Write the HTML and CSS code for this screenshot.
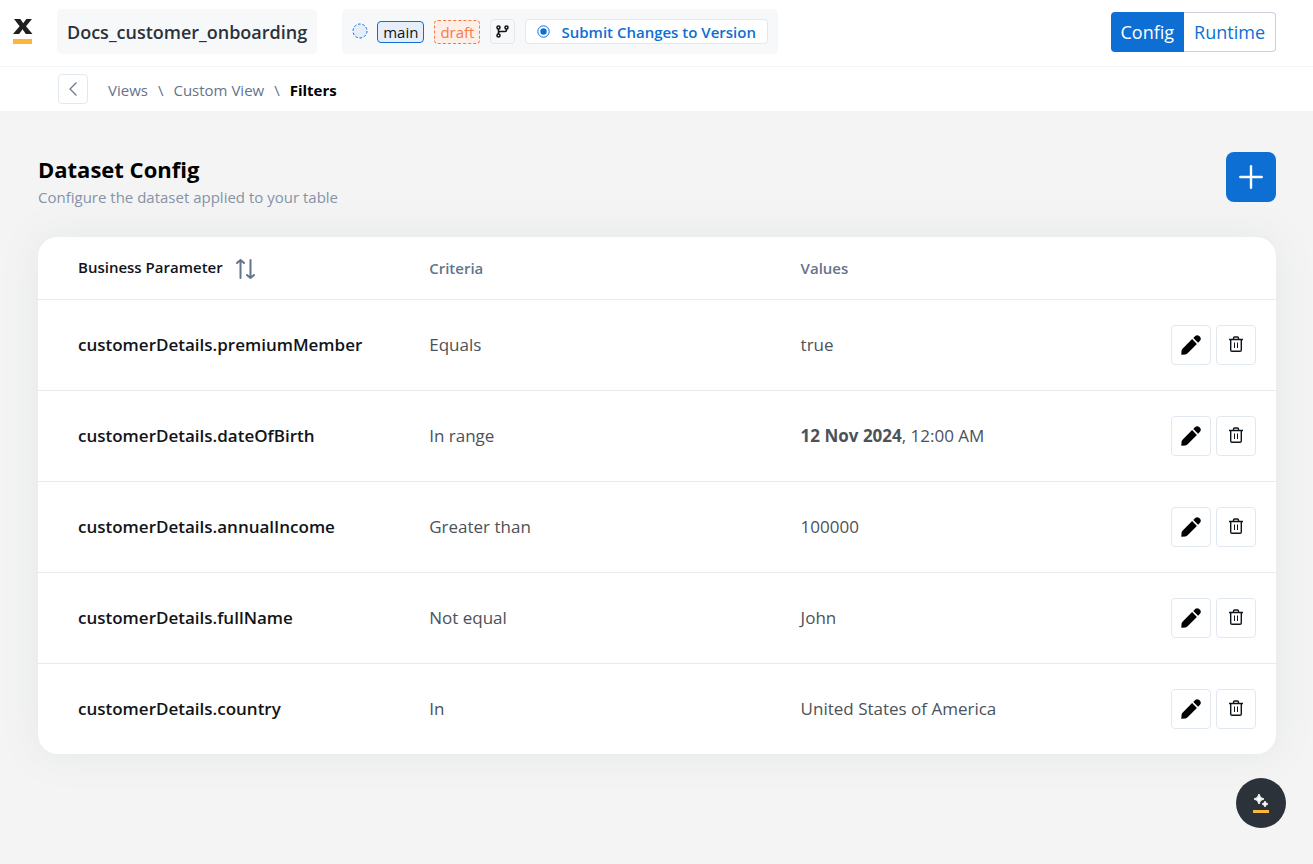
FILE: index.html
```
<!DOCTYPE html>
<html lang="en">
<head>
  <meta charset="UTF-8">
  <meta name="viewport" content="width=device-width, initial-scale=1.0">
  <title>Filters</title>
  <link rel="stylesheet" href="styles.css">
</head>
<body>

  <!-- Shared icons -->
  <svg class="sprite" aria-hidden="true">
    <symbol id="pencil" viewBox="0 0 20 20">
      <path d="M0.3 19.7 L0.6 15.6 Q0.8 14.4 1.8 13.4 L11.1 4.100 L15.900 8.900 L6.6 18.2 Q5.600 19.200 4.400 19.400 Z"/>
      <path d="M12.300 2.900 L14.200 1 Q16.200 -0.600 18.200 1 L19 1.800 Q20.600 3.800 19 5.800 L17.100 7.700 Z"/>
    </symbol>
    <symbol id="trash" viewBox="0 0 14 16">
      <path d="M0 3.500H14M4.500 3V2.300Q4.500 1 5.500 1H8.500Q9.500 1 9.500 2.300V3M1.700 3.500V14Q1.700 15.300 3 15.300H11Q12.300 15.300 12.300 14V3.500" fill="none" stroke="currentColor" stroke-width="1.400"/>
      <path d="M5.500 6.500V12M8.500 6.500V12" fill="none" stroke="currentColor"/>
    </symbol>
  </svg>

  <header class="topbar">
    <a class="logo" href="#" aria-label="Home">
      <svg width="20" height="26" viewBox="0 0 20 26">
        <path d="M1 0H7.300L10.200 4.300L13.300 0H19L13 7.300L19.500 15H12.800L9.600 10.300L6.100 15H0L6.600 7.300Z" fill="#1f1f1f"/>
        <path d="M0 20H19V25H0Z" fill="#fdb53a"/>
      </svg>
    </a>
    <div class="project">Docs_customer_onboarding</div>
    <div class="version">
      <svg class="status" width="16" height="16" viewBox="0 0 16 16">
        <circle cx="8" cy="7" r="7" fill="#e6eefa" stroke="#0d6fd3" stroke-dasharray="2.600 1.800"/>
      </svg>
      <span class="tag tag-main">main</span>
      <span class="tag tag-draft">draft</span>
      <button class="branch" aria-label="Branches">
        <svg width="13" height="13" viewBox="0 0 13 13" fill="none" stroke="#111418" stroke-width="1.600">
          <circle cx="2.500" cy="2.500" r="1.500"/>
          <circle cx="10.500" cy="2.500" r="1.500"/>
          <circle cx="2.500" cy="10.500" r="1.500"/>
          <path d="M2.500 4V9M10.500 4V5Q10.500 6.500 9 6.500H4Q2.500 6.500 2.500 8"/>
        </svg>
      </button>
      <button class="submit">
        <svg width="13" height="13" viewBox="0 0 13 13">
          <circle cx="6.500" cy="6.500" r="5.700" fill="none" stroke="#0d6fd3"/>
          <circle cx="6.500" cy="6.500" r="3.200" fill="#0d6fd3"/>
        </svg>
        Submit Changes to Version
      </button>
    </div>
    <div class="mode">
      <button class="active">Config</button><button>Runtime</button>
    </div>
  </header>

  <nav class="crumbs">
    <button class="back" aria-label="Back">
      <svg width="8" height="14" viewBox="0 0 8 14"><path d="M7.500 0.500L1 7L7.500 13.500" fill="none" stroke="#64748b" stroke-width="1.200"/></svg>
    </button>
    <div class="trail">
      <a href="#">Views</a>
      <span>\</span>
      <a href="#">Custom View</a>
      <span>\</span>
      <strong>Filters</strong>
    </div>
  </nav>

  <main class="content">
    <div class="heading">
      <div>
        <h1>Dataset Config</h1>
        <p>Configure the dataset applied to your table</p>
      </div>
      <button class="add" aria-label="Add filter">
        <svg width="24" height="24" viewBox="0 0 24 24"><path d="M12 1.300V22.700M1.300 12H22.700" stroke="#fff" stroke-width="2.400" stroke-linecap="round"/></svg>
      </button>
    </div>

    <table class="filters">
      <thead>
        <tr>
          <th class="col-param">
            <button class="sort">
              <span>Business Parameter</span>
              <svg width="20" height="20" viewBox="0 0 20 20" fill="none" stroke="#64748b" stroke-width="2" stroke-linecap="round" stroke-linejoin="round"><path d="M4.500 19V1M1 4L4.500 1L8 4M14.500 1V19M11 16L14.500 19L18 16"/></svg>
            </button>
          </th>
          <th class="col-mid">Criteria</th>
          <th class="col-mid">Values</th>
          <th></th>
        </tr>
      </thead>
      <tbody>
        <tr>
          <td>customerDetails.premiumMember</td>
          <td>Equals</td>
          <td>true</td>
          <td><div class="actions">
            <button aria-label="Edit"><svg width="20" height="20"><use href="#pencil"/></svg></button>
            <button aria-label="Delete"><svg class="trash" width="14" height="16"><use href="#trash"/></svg></button>
          </div></td>
        </tr>
        <tr>
          <td>customerDetails.dateOfBirth</td>
          <td>In range</td>
          <td><b>12 Nov 2024</b>, 12:00 AM</td>
          <td><div class="actions">
            <button aria-label="Edit"><svg width="20" height="20"><use href="#pencil"/></svg></button>
            <button aria-label="Delete"><svg class="trash" width="14" height="16"><use href="#trash"/></svg></button>
          </div></td>
        </tr>
        <tr>
          <td>customerDetails.annualIncome</td>
          <td>Greater than</td>
          <td>100000</td>
          <td><div class="actions">
            <button aria-label="Edit"><svg width="20" height="20"><use href="#pencil"/></svg></button>
            <button aria-label="Delete"><svg class="trash" width="14" height="16"><use href="#trash"/></svg></button>
          </div></td>
        </tr>
        <tr>
          <td>customerDetails.fullName</td>
          <td>Not equal</td>
          <td>John</td>
          <td><div class="actions">
            <button aria-label="Edit"><svg width="20" height="20"><use href="#pencil"/></svg></button>
            <button aria-label="Delete"><svg class="trash" width="14" height="16"><use href="#trash"/></svg></button>
          </div></td>
        </tr>
        <tr>
          <td>customerDetails.country</td>
          <td>In</td>
          <td>United States of America</td>
          <td><div class="actions">
            <button aria-label="Edit"><svg width="20" height="20"><use href="#pencil"/></svg></button>
            <button aria-label="Delete"><svg class="trash" width="14" height="16"><use href="#trash"/></svg></button>
          </div></td>
        </tr>
      </tbody>
    </table>
  </main>

  <button class="assistant" aria-label="Assistant">
    <svg width="16" height="20" viewBox="0 0 16 20">
      <path d="M6 1Q6.700 5.300 11 6Q6.700 6.700 6 11Q5.300 6.700 1 6Q5.300 5.300 6 1Z" fill="#fff" stroke="#fff"/>
      <path d="M12 8Q12.500 10.500 15 11Q12.500 11.500 12 14Q11.500 11.500 9 11Q11.500 10.500 12 8Z" fill="#fff" stroke="#fff" stroke-width="0.800"/>
      <path d="M0 17H16V20H0Z" fill="#fdb53a"/>
    </svg>
  </button>

</body>
</html>
```
FILE: styles.css
```
* {
  box-sizing: border-box;
}
body {
  margin: 0;
  min-height: 100vh;
  background: #f4f4f4;
  color: #111418;
  font-family: "Open Sans", "Noto Sans", sans-serif;
  font-size: 16px;
}
button {
  display: inline-flex;
  align-items: center;
  justify-content: center;
  padding: 0;
  border: 1px solid #e2e8f0;
  border-radius: 4px;
  background: #fff;
  color: inherit;
  font: inherit;
  cursor: pointer;
}
.sprite {
  display: none;
}

/* top bar */
.topbar {
  display: flex;
  align-items: center;
  height: 67px;
  padding: 0 37px 3px 13px;
  border-bottom: 1px solid #f4f5f7;
  background: #fff;
}
.logo {
  display: flex;
  width: 44px;
}
.project,
.version {
  display: flex;
  align-items: center;
  height: 45px;
  border-radius: 5px;
  background: #f7f8fa;
}
.project {
  margin-right: 25px;
  padding: 0 10px;
  color: #2b323a;
  font-size: 18px;
  font-weight: 600;
}
.version {
  gap: 10px;
  padding: 0 10px;
}
.status {
  margin-right: -1px;
  overflow: visible;
}
.tag {
  padding: 0 5px;
  border-radius: 4px;
  font-size: 15px;
  line-height: 20px;
}
.tag-main {
  border: 1px solid #0d6fd3;
  background: #e6eefa;
}
.tag-draft {
  border: 1px dashed #f97b45;
  background: #feeee8;
  color: #f97b45;
  line-height: 22px;
}
.branch {
  width: 25px;
  height: 25px;
  background: #f7f8fa;
}
.submit {
  gap: 11px;
  height: 25px;
  padding: 0 11px;
  color: #0d6fd3;
  font-size: 15px;
  font-weight: 600;
}
.mode {
  display: flex;
  margin-left: auto;
}
.mode button {
  height: 40px;
  padding: 0 10px;
  border-color: #cbd0da;
  border-left: 0;
  border-radius: 0 4px 4px 0;
  color: #0d6fd3;
  font-size: 18px;
}
.mode .active {
  border: 0;
  border-radius: 4px 0 0 4px;
  background: #0d6fd3;
  color: #fff;
}

/* breadcrumbs */
.crumbs {
  display: flex;
  align-items: center;
  gap: 20px;
  height: 44px;
  padding: 0 58px;
  background: #fff;
  color: #64748b;
  font-size: 15px;
}
.trail {
  display: flex;
  gap: 10px;
  padding-top: 2px;
}
.crumbs a {
  color: inherit;
  text-decoration: none;
}
.crumbs strong {
  color: #000;
}
.back {
  width: 30px;
  height: 30px;
}

/* content */
.content {
  padding: 41px 37px 40px 38px;
}
.heading {
  display: flex;
  justify-content: space-between;
  align-items: flex-start;
  margin-bottom: 30px;
}
.heading h1 {
  margin: 0;
  color: #000;
  font-size: 22px;
  line-height: 35px;
}
.heading p {
  margin: 0;
  color: #8593a7;
  font-size: 15px;
  line-height: 20px;
}
.add {
  width: 50px;
  height: 50px;
  border: 0;
  border-radius: 8px;
  background: #0d6fd3;
}
.filters {
  width: 100%;
  border-collapse: separate;
  border-spacing: 0;
  table-layout: fixed;
  border-radius: 20px;
  background: #fff;
  box-shadow: 0 0 40px rgba(100, 116, 139, 0.1);
}
.filters th,
.filters td {
  padding: 0;
  border-bottom: 1px solid #e8e9eb;
  text-align: left;
}
.filters th {
  height: 63px;
  color: #64748b;
  font-size: 15px;
  font-weight: 600;
}
.filters td {
  height: 91px;
  padding-bottom: 2px;
  color: #4b5259;
  font-size: 17px;
}
.filters td:last-child {
  padding-bottom: 0;
}
.filters tbody tr:last-child td {
  height: 90px;
  border-bottom: 0;
}
.filters tr > :first-child {
  padding-left: 40px;
}
.filters td:first-child {
  color: #111418;
  font-weight: 600;
}
.col-param {
  width: 31.6%;
}
.col-mid {
  width: 30%;
}
.sort {
  gap: 13px;
  border: 0;
  color: #111418;
}
.sort span {
  padding-bottom: 2px;
}
.sort svg {
  margin-top: 2px;
}
.actions {
  display: flex;
  justify-content: flex-end;
  gap: 5px;
  padding-right: 20px;
}
.actions button {
  flex: none;
  width: 40px;
  height: 40px;
  color: #111418;
}
.trash {
  margin-bottom: 2px;
}

/* floating helper */
.assistant {
  position: fixed;
  right: 27px;
  bottom: 36px;
  width: 50px;
  height: 50px;
  border: 0;
  border-radius: 50%;
  background: #2b323a;
}
```
